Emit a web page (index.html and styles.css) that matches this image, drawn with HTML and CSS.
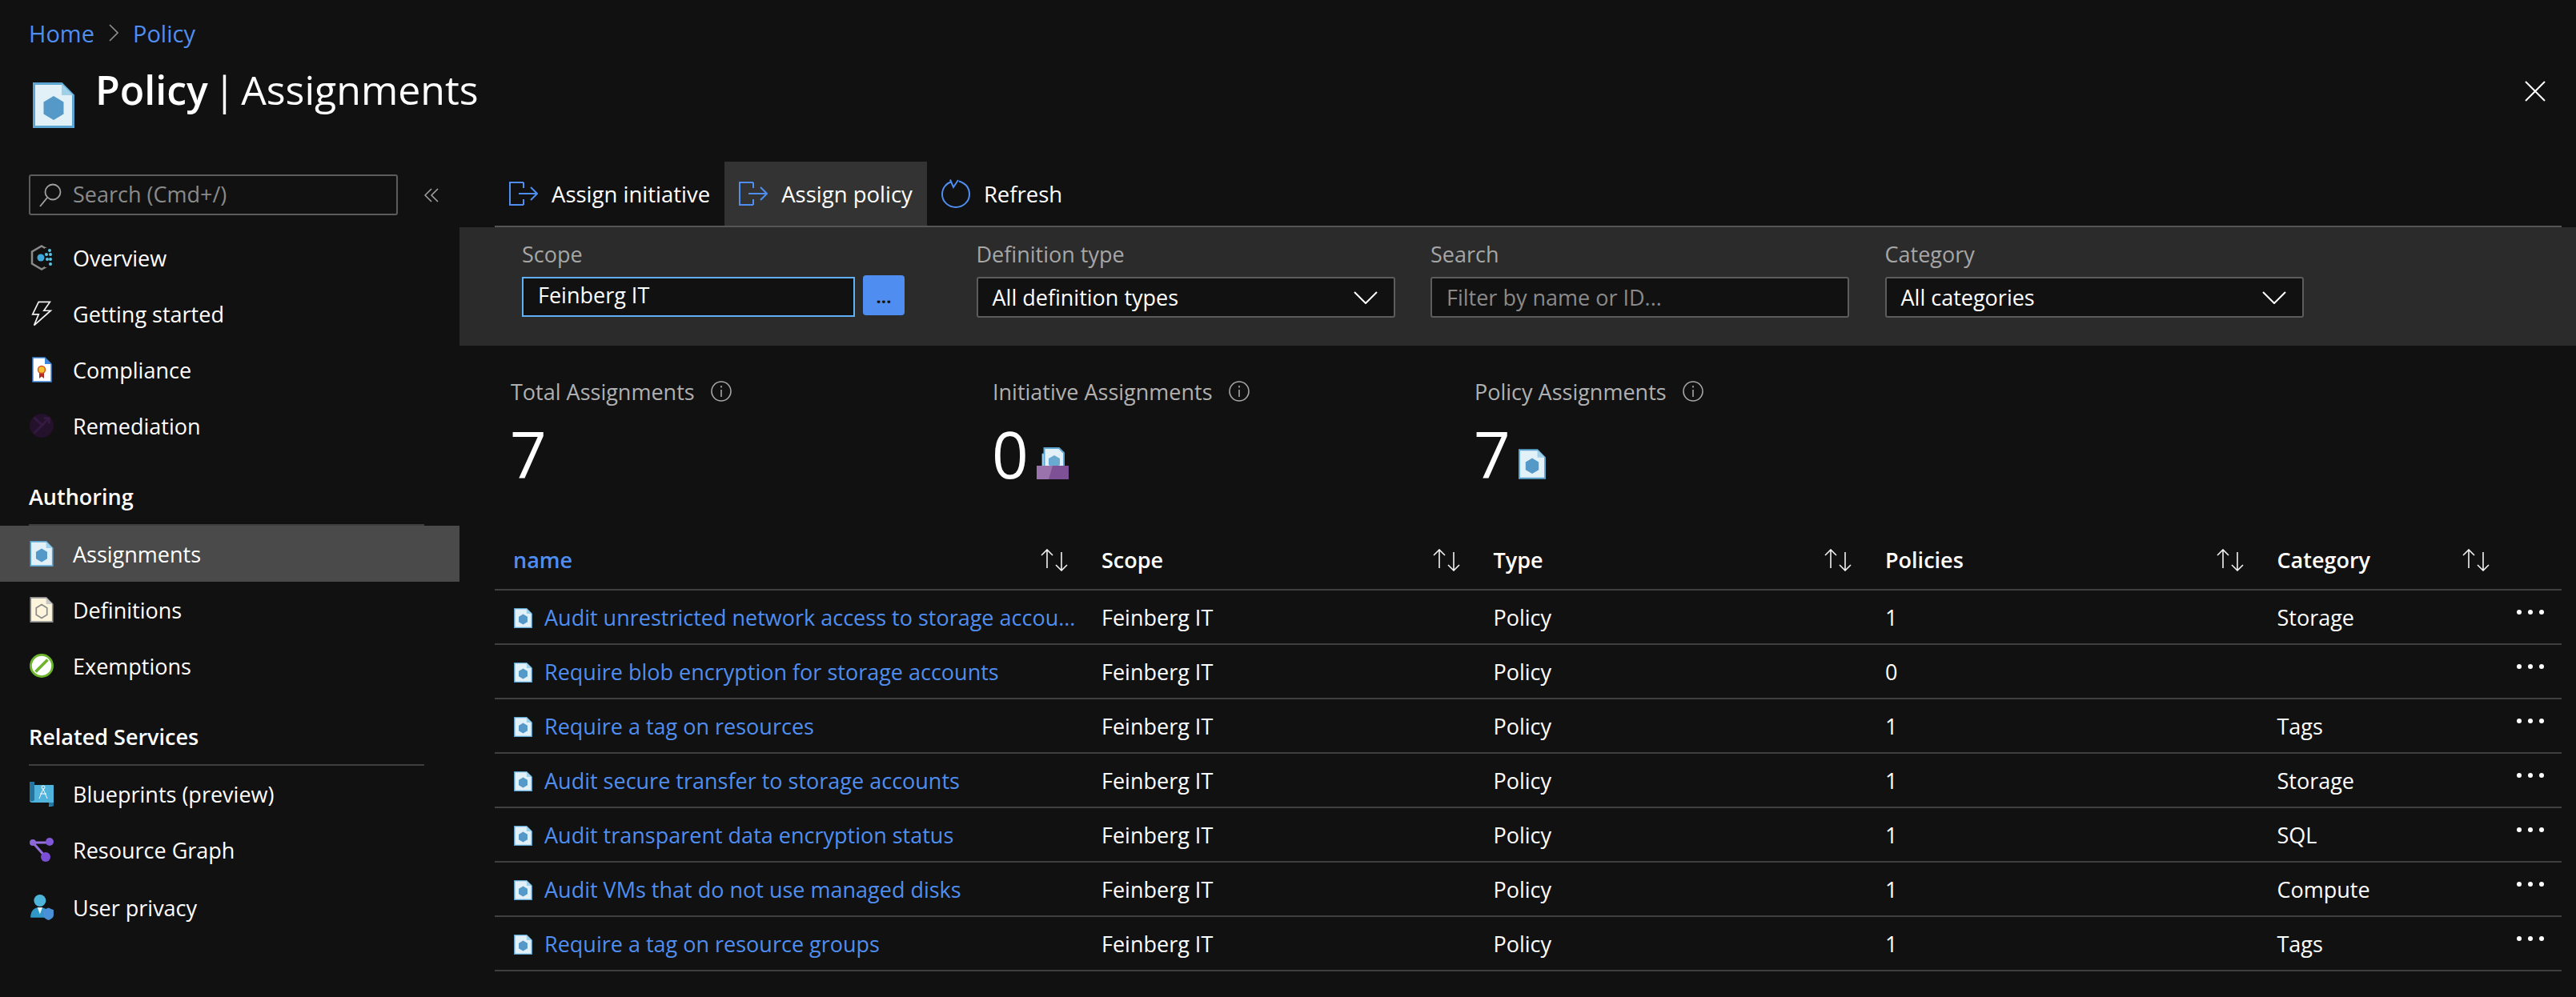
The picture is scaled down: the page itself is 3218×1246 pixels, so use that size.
FILE: index.html
```html
<!DOCTYPE html>
<html lang="en">
<head>
    <meta charset="UTF-8">
    <title>Policy | Assignments</title>
    <link rel="stylesheet" href="styles.css">
</head>
<body>

<svg class="defs" width="0" height="0">
    <symbol id="doc-blue" viewBox="0 0 52 57">
        <path d="M1.5 1.5H36L50.5 16V55.5H1.5Z" fill="#e2f0f8" stroke="#5ea6d2" stroke-width="3"/>
        <path d="M36 1.5L50.5 16H36Z" fill="#9fd0ea"/>
        <path d="M26 17L38.500 24.500V39.500L26 47L13.500 39.500V24.500Z" fill="#5499c7"/>
    </symbol>
    <symbol id="doc-cream" viewBox="0 0 52 57">
        <path d="M1.5 1.5H36L50.5 16V55.500H1.5Z" fill="#fdf4dc" stroke="#8c8c8c" stroke-width="3"/>
        <path d="M36 1.5L50.500 16H36Z" fill="#c8c8c8"/>
        <path d="M26 17L38 24.500V39.500L26 47L14 39.500V24.500Z" fill="none" stroke="#8c8c8c" stroke-width="3"/>
    </symbol>
    <symbol id="assign" viewBox="0 0 36 30">
        <path d="M18 1H1V29H18M18 1V8M18 29V22M12 15H35M27 7L35 15L27 23" fill="none" stroke="#4f8ef0" stroke-width="2"/>
    </symbol>
    <symbol id="sort" viewBox="0 0 34 28">
        <path d="M8 24V1M1 8L8 1L15 8M26 4V27M19 20L26 27L33 20" fill="none" stroke="#f2f2f2" stroke-width="1.600"/>
    </symbol>
    <symbol id="info" viewBox="0 0 26 26">
        <circle cx="13" cy="13" r="12" fill="none" stroke="#a6a6a6" stroke-width="1.600"/>
        <path d="M13 11V20M13 6V8.500" fill="none" stroke="#a6a6a6" stroke-width="1.600"/>
    </symbol>
    <symbol id="caret" viewBox="0 0 30 16">
        <path d="M1 1L15 15L29 1" fill="none" stroke="#fff" stroke-width="2"/>
    </symbol>
    <symbol id="more" viewBox="0 0 34 6">
        <circle cx="3" cy="3" r="3" fill="#fff"/>
        <circle cx="17" cy="3" r="3" fill="#fff"/>
        <circle cx="31" cy="3" r="3" fill="#fff"/>
    </symbol>
</svg>

<div class="page">
    <nav class="crumbs">
        <a>Home</a>
        <svg class="crumb-sep" viewBox="0 0 12 22"><path d="M1 1L11 11L1 21" fill="none" stroke="#8f8f8f" stroke-width="1.600"/></svg>
        <a>Policy</a>
    </nav>

    <header class="title-bar">
        <svg class="title-icon"><use href="#doc-blue"/></svg>
        <h1><b>Policy</b> | Assignments</h1>
        <svg class="close" viewBox="0 0 26 26"><path d="M1 1L25 25M25 1L1 25" fill="none" stroke="#fff" stroke-width="2"/></svg>
    </header>

    <div class="main">
        <aside class="sidebar">
            <div class="search-row">
                <div class="side-search">
                    <svg viewBox="0 0 28 30"><circle cx="17" cy="11" r="9.500" fill="none" stroke="#a0a0a0" stroke-width="1.800"/><path d="M10 18L1 29" stroke="#a0a0a0" stroke-width="1.800"/></svg>
                    <span>Search (Cmd+/)</span>
                </div>
                <svg class="collapse" viewBox="0 0 18 18"><path d="M9 1L1 9L9 17M17 1L9 9L17 17" fill="none" stroke="#a6a6a6" stroke-width="1.500"/></svg>
            </div>

            <a class="nav-item">
                <svg class="nav-icon" viewBox="0 0 28 32">
                    <path d="M14 1.500L26 8.500V23.500L14 30.500L2 23.500V8.500Z" fill="none" stroke="#8a8a8a" stroke-width="2.500"/>
                    <rect x="18" y="4" width="10" height="24" fill="#111"/>
                    <circle cx="13" cy="16" r="4.500" fill="#3fa9dc"/>
                    <circle cx="24" cy="7" r="2" fill="#59c5e8"/><circle cx="20" cy="12" r="2" fill="#59c5e8"/><circle cx="25" cy="12" r="2" fill="#59c5e8"/>
                    <circle cx="21" cy="18" r="2" fill="#59c5e8"/><circle cx="25" cy="18" r="2" fill="#59c5e8"/><circle cx="25" cy="24" r="2" fill="#59c5e8"/>
                </svg>
                <span>Overview</span>
            </a>
            <a class="nav-item">
                <svg class="nav-icon" viewBox="0 0 28 34"><path d="M10 1.500H25L17 13H26L4 32.500L10 18H2Z" fill="none" stroke="#f2f2f2" stroke-width="1.800"/></svg>
                <span>Getting started</span>
            </a>
            <a class="nav-item">
                <svg class="nav-icon" viewBox="0 0 28 32">
                    <path d="M3 1H18L26 9V31H3Z" fill="#fff" stroke="#3f86d8" stroke-width="1.500"/>
                    <path d="M18 1L26 9H18Z" fill="#3f86d8"/>
                    <path d="M11 19V27L14 24.500L17 27V19Z" fill="#b02a2a"/>
                    <circle cx="14" cy="16" r="4.500" fill="#f2c230" stroke="#d9541e" stroke-width="1.500"/>
                </svg>
                <span>Compliance</span>
            </a>
            <a class="nav-item">
                <svg class="nav-icon" viewBox="0 0 32 32">
                    <circle cx="16" cy="16" r="16" fill="#24122c"/>
                    <path d="M6 26L17 15L12 11L6 5M17 15L25 7M19 6H26V13" fill="none" stroke="#341a40" stroke-width="3"/>
                </svg>
                <span>Remediation</span>
            </a>

            <h2 class="side-title">Authoring</h2>
            <a class="nav-item active">
                <svg class="nav-icon"><use href="#doc-blue"/></svg>
                <span>Assignments</span>
            </a>
            <a class="nav-item">
                <svg class="nav-icon"><use href="#doc-cream"/></svg>
                <span>Definitions</span>
            </a>
            <a class="nav-item">
                <svg class="nav-icon" viewBox="0 0 32 32">
                    <circle cx="16" cy="16" r="14.500" fill="#fff" stroke="#6cb52d" stroke-width="3"/>
                    <path d="M8 24L24 8" stroke="#6cb52d" stroke-width="4"/>
                </svg>
                <span>Exemptions</span>
            </a>

            <h2 class="side-title">Related Services</h2>
            <a class="nav-item">
                <svg class="nav-icon" viewBox="0 0 30 32">
                    <path d="M0 1H6V5H30V27H28V32H24V27H3C1 27 0 26 0 24Z" fill="#4fb3dc"/>
                    <path d="M0 1H6V23C6 26 1 26 0 24ZM24 27H30V31C30 32 25 32 24 31Z" fill="#23749f"/>
                    <circle cx="17" cy="8" r="2" fill="none" stroke="#fff"/>
                    <path d="M17 10L12 22M17 10L22 22M13 16H21" fill="none" stroke="#fff"/>
                </svg>
                <span>Blueprints (preview)</span>
            </a>
            <a class="nav-item">
                <svg class="nav-icon" viewBox="0 0 30 30">
                    <path d="M4 6H25M4 6L20 24" stroke="#9470dd" stroke-width="3" fill="none"/>
                    <circle cx="4" cy="6" r="4" fill="#8c68d8"/><circle cx="25" cy="5" r="5" fill="#8158d8"/><circle cx="20" cy="24" r="6" fill="#7a4fd6"/>
                </svg>
                <span>Resource Graph</span>
            </a>
            <a class="nav-item privacy">
                <svg class="nav-icon" viewBox="0 0 28 30">
                    <circle cx="12" cy="7" r="7" fill="#4db4da"/>
                    <path d="M1 27C1 19 5 15 12 15C19 15 23 19 23 27Z" fill="#2f98c8"/>
                    <path d="M9 15H15L12 23Z" fill="#e8f5fb"/>
                    <path d="M16 18L22 15.500L28 18V24C28 27 25 29 22 30C19 29 16 27 16 24Z" fill="#4a90d9"/>
                </svg>
                <span>User privacy</span>
            </a>
        </aside>

        <section class="content">
            <div class="toolbar">
                <button class="tool">
                    <svg class="tool-icon"><use href="#assign"/></svg>
                    Assign initiative
                </button>
                <button class="tool on">
                    <svg class="tool-icon"><use href="#assign"/></svg>
                    Assign policy
                </button>
                <button class="tool">
                    <svg class="tool-icon" viewBox="0 0 36 36"><path d="M22 2.500C30 5 35 11 35 19C35 28 27 35 18 35C9 35 1 28 1 19C1 11 6 5 13 3M11 0.500L15 10L21 1" fill="none" stroke="#4f8ef0" stroke-width="2"/></svg>
                    Refresh
                </button>
            </div>

            <div class="filters">
                <div class="field">
                    <label>Scope</label>
                    <div class="scope-row">
                        <div class="scope-input">Feinberg IT</div>
                        <button class="scope-btn">...</button>
                    </div>
                </div>
                <div class="field">
                    <label>Definition type</label>
                    <div class="select"><span>All definition types</span><svg class="caret"><use href="#caret"/></svg></div>
                </div>
                <div class="field">
                    <label>Search</label>
                    <div class="select filter-input">Filter by name or ID...</div>
                </div>
                <div class="field">
                    <label>Category</label>
                    <div class="select"><span>All categories</span><svg class="caret"><use href="#caret"/></svg></div>
                </div>
            </div>

            <div class="stats">
                <div class="stat">
                    <div class="stat-label">Total Assignments <svg class="info"><use href="#info"/></svg></div>
                    <div class="stat-num">7</div>
                </div>
                <div class="stat">
                    <div class="stat-label">Initiative Assignments <svg class="info"><use href="#info"/></svg></div>
                    <div class="stat-num">0
                        <svg class="stat-icon" viewBox="0 0 40 40">
                            <path d="M7 8H10V26H7Z" fill="#e2f0f8" stroke="#5ea6d2"/>
                            <path d="M9.500 1H28L34 7V26H9.500Z" fill="#e2f0f8" stroke="#5ea6d2" stroke-width="2"/>
                            <path d="M22 10L29 14V22L22 26L15 22V14Z" fill="#6aa9d0"/>
                            <path d="M0 23H40V40H0Z" fill="#7e5096"/>
                            <path d="M0 23H20L15 40H0Z" fill="#9a72ac"/>
                        </svg>
                    </div>
                </div>
                <div class="stat">
                    <div class="stat-label">Policy Assignments <svg class="info"><use href="#info"/></svg></div>
                    <div class="stat-num">7
                        <svg class="stat-icon doc"><use href="#doc-blue"/></svg>
                    </div>
                </div>
            </div>

            <table class="grid">
                <colgroup>
                    <col class="col-name"><col class="col-std"><col class="col-std"><col class="col-std"><col class="col-last">
                </colgroup>
                <thead>
                    <tr>
                        <th class="sorted"><div class="th-in"><span>name</span><svg class="sort"><use href="#sort"/></svg></div></th>
                        <th><div class="th-in"><span>Scope</span><svg class="sort"><use href="#sort"/></svg></div></th>
                        <th><div class="th-in"><span>Type</span><svg class="sort"><use href="#sort"/></svg></div></th>
                        <th><div class="th-in"><span>Policies</span><svg class="sort"><use href="#sort"/></svg></div></th>
                        <th><div class="th-in"><span>Category</span><svg class="sort"><use href="#sort"/></svg></div></th>
                    </tr>
                </thead>
                <tbody>
                    <tr>
                        <td><div class="name-cell"><svg class="row-icon"><use href="#doc-blue"/></svg><a>Audit unrestricted network access to storage accou...</a></div></td>
                        <td>Feinberg IT</td><td>Policy</td><td>1</td>
                        <td><div class="cat-cell"><span>Storage</span><svg class="more"><use href="#more"/></svg></div></td>
                    </tr>
                    <tr>
                        <td><div class="name-cell"><svg class="row-icon"><use href="#doc-blue"/></svg><a>Require blob encryption for storage accounts</a></div></td>
                        <td>Feinberg IT</td><td>Policy</td><td>0</td>
                        <td><div class="cat-cell"><span></span><svg class="more"><use href="#more"/></svg></div></td>
                    </tr>
                    <tr>
                        <td><div class="name-cell"><svg class="row-icon"><use href="#doc-blue"/></svg><a>Require a tag on resources</a></div></td>
                        <td>Feinberg IT</td><td>Policy</td><td>1</td>
                        <td><div class="cat-cell"><span>Tags</span><svg class="more"><use href="#more"/></svg></div></td>
                    </tr>
                    <tr>
                        <td><div class="name-cell"><svg class="row-icon"><use href="#doc-blue"/></svg><a>Audit secure transfer to storage accounts</a></div></td>
                        <td>Feinberg IT</td><td>Policy</td><td>1</td>
                        <td><div class="cat-cell"><span>Storage</span><svg class="more"><use href="#more"/></svg></div></td>
                    </tr>
                    <tr>
                        <td><div class="name-cell"><svg class="row-icon"><use href="#doc-blue"/></svg><a>Audit transparent data encryption status</a></div></td>
                        <td>Feinberg IT</td><td>Policy</td><td>1</td>
                        <td><div class="cat-cell"><span>SQL</span><svg class="more"><use href="#more"/></svg></div></td>
                    </tr>
                    <tr>
                        <td><div class="name-cell"><svg class="row-icon"><use href="#doc-blue"/></svg><a>Audit VMs that do not use managed disks</a></div></td>
                        <td>Feinberg IT</td><td>Policy</td><td>1</td>
                        <td><div class="cat-cell"><span>Compute</span><svg class="more"><use href="#more"/></svg></div></td>
                    </tr>
                    <tr>
                        <td><div class="name-cell"><svg class="row-icon"><use href="#doc-blue"/></svg><a>Require a tag on resource groups</a></div></td>
                        <td>Feinberg IT</td><td>Policy</td><td>1</td>
                        <td><div class="cat-cell"><span>Tags</span><svg class="more"><use href="#more"/></svg></div></td>
                    </tr>
                </tbody>
            </table>
        </section>
    </div>
</div>

</body>
</html>
```

FILE: styles.css
```css
* {
    box-sizing: border-box;
}

body {
    margin: 0;
    background-color: #111111;
    color: #ffffff;
    font-family: "Open Sans", "Noto Sans", sans-serif;
    font-size: 27px;
}

.defs {
    position: absolute;
}

.page {
    width: 3218px;
    height: 1246px;
    overflow: hidden;
}

/* breadcrumb + title */
.crumbs {
    height: 82px;
    padding-left: 36px;
    display: flex;
    align-items: center;
    gap: 18px;
    color: #4f8ef0;
    font-size: 29px;
}

.crumb-sep {
    width: 12px;
    height: 22px;
}

.title-bar {
    height: 120px;
    padding: 10px 38px 0 41px;
    display: flex;
    align-items: flex-start;
}

.title-icon {
    width: 52px;
    height: 57px;
    margin-top: 11px;
}

.title-bar h1 {
    margin: -14px 0 0 26px;
    font-size: 50px;
    font-weight: 400;
    line-height: 68px;
    word-spacing: -6px;
}

.title-bar h1 b {
    font-weight: 600;
}

.close {
    width: 26px;
    height: 26px;
    margin-left: auto;
    margin-top: 9px;
}

.main {
    display: flex;
    height: 1044px;
}

/* sidebar */
.sidebar {
    width: 574px;
    flex-shrink: 0;
    padding-top: 16px;
}

.search-row {
    display: flex;
    align-items: center;
    padding-left: 36px;
    margin-bottom: 18px;
}

.side-search {
    width: 461px;
    height: 51px;
    border: 2px solid #5c5c5c;
    border-radius: 3px;
    display: flex;
    align-items: center;
    padding-left: 11px;
    color: #8a8a8a;
}

.side-search svg {
    width: 28px;
    height: 30px;
    margin-right: 14px;
}

.side-search span {
    margin-top: -2px;
}

.collapse {
    width: 18px;
    height: 18px;
    margin-left: 33px;
}

.nav-item {
    height: 70px;
    display: flex;
    align-items: center;
    padding-left: 37px;
}

.nav-item.active {
    background-color: #4a4a4a;
}

.nav-item.privacy {
    margin-top: 2px;
}

.nav-icon {
    width: 30px;
    height: 32px;
    margin-right: 24px;
}

.side-title {
    height: 70px;
    margin: 20px 44px 0 36px;
    border-bottom: 2px solid #3e3e3e;
    font-size: 27px;
    font-weight: 600;
    line-height: 68px;
}

/* toolbar */
.content {
    flex: 1;
    min-width: 0;
}

.toolbar {
    height: 82px;
    margin: 0 18px 0 44px;
    border-bottom: 2px solid #555555;
    display: flex;
}

.tool {
    height: 80px;
    padding: 0 18px 0 18px;
    border: none;
    background: none;
    color: #ffffff;
    font-family: inherit;
    font-size: 27.500px;
    display: flex;
    align-items: center;
    gap: 17px;
}

.tool.on {
    background-color: #333333;
}

.tool-icon {
    width: 36px;
    height: 36px;
}

/* filter panel */
.filters {
    height: 148px;
    background-color: #2b2b2b;
    padding: 16px 0 0 78px;
    display: grid;
    grid-template-columns: repeat(4, 523px);
    column-gap: 44.500px;
    align-content: start;
}

.field label {
    display: block;
    height: 36px;
    line-height: 36px;
    margin-bottom: 10px;
    color: #a6a6a6;
}

.scope-row {
    display: flex;
    gap: 10px;
}

.scope-input {
    width: 416px;
    height: 50px;
    border: 2px solid #5fb0f5;
    background-color: #111111;
    padding-left: 18px;
    line-height: 42px;
}

.scope-btn {
    width: 52px;
    height: 50px;
    margin-top: -2px;
    border: none;
    border-radius: 4px;
    background-color: #4f8ef0;
    color: #111111;
    font-family: inherit;
    font-size: 22px;
    font-weight: 700;
    line-height: 50px;
}

.select {
    height: 51px;
    border: 2px solid #5c5c5c;
    border-radius: 3px;
    background-color: #111111;
    padding: 0 18px;
    display: flex;
    align-items: center;
    justify-content: space-between;
}

.filter-input {
    color: #8a8a8a;
}

.caret {
    width: 30px;
    height: 16px;
    margin-right: 2px;
}

/* stat blocks */
.stats {
    height: 232px;
    padding: 38px 0 0 64px;
    display: grid;
    grid-template-columns: repeat(3, 602px);
    align-content: start;
}

.stat-label {
    height: 38px;
    display: flex;
    align-items: center;
    gap: 20px;
    color: #b0b0b0;
}

.info {
    width: 26px;
    height: 26px;
}

.stat-num {
    display: flex;
    align-items: flex-end;
    gap: 10px;
    height: 88px;
    margin-top: 15px;
    margin-left: -1px;
    font-size: 80px;
    line-height: 88px;
    font-weight: 400;
}

.stat-icon {
    width: 40px;
    height: 40px;
    margin-bottom: 12px;
}

.stat-icon.doc {
    width: 34px;
    height: 38px;
}

/* table */
.grid {
    margin-left: 44px;
    width: 2582px;
    table-layout: fixed;
    border-collapse: separate;
    border-spacing: 0;
}

.col-name {
    width: 735px;
}

.col-std {
    width: 489.500px;
}

.col-last {
    width: 378.500px;
}

.grid th {
    height: 74px;
    padding: 0 0 0 23px;
    border-bottom: 2px solid #404040;
    text-align: left;
    font-weight: 600;
}

.grid th.sorted {
    color: #4f8ef0;
}

.th-in {
    display: flex;
    align-items: center;
    justify-content: space-between;
}

.th-in span {
    line-height: 36px;
}

.sort {
    width: 34px;
    height: 28px;
    margin-right: 19px;
}

.grid th:last-child .sort {
    margin-right: 90px;
}

.grid td {
    height: 68px;
    padding: 0 0 0 23px;
    border-bottom: 2px solid #404040;
}

.name-cell {
    display: flex;
    align-items: center;
}

.row-icon {
    width: 23px;
    height: 25px;
    margin: 2px 15px 0 1px;
    flex-shrink: 0;
}

.name-cell a {
    color: #4f8ef0;
    white-space: nowrap;
}

.cat-cell {
    display: flex;
    align-items: center;
    justify-content: space-between;
}

.more {
    width: 34px;
    height: 6px;
    margin: -12px 22px 0 0;
}
```
